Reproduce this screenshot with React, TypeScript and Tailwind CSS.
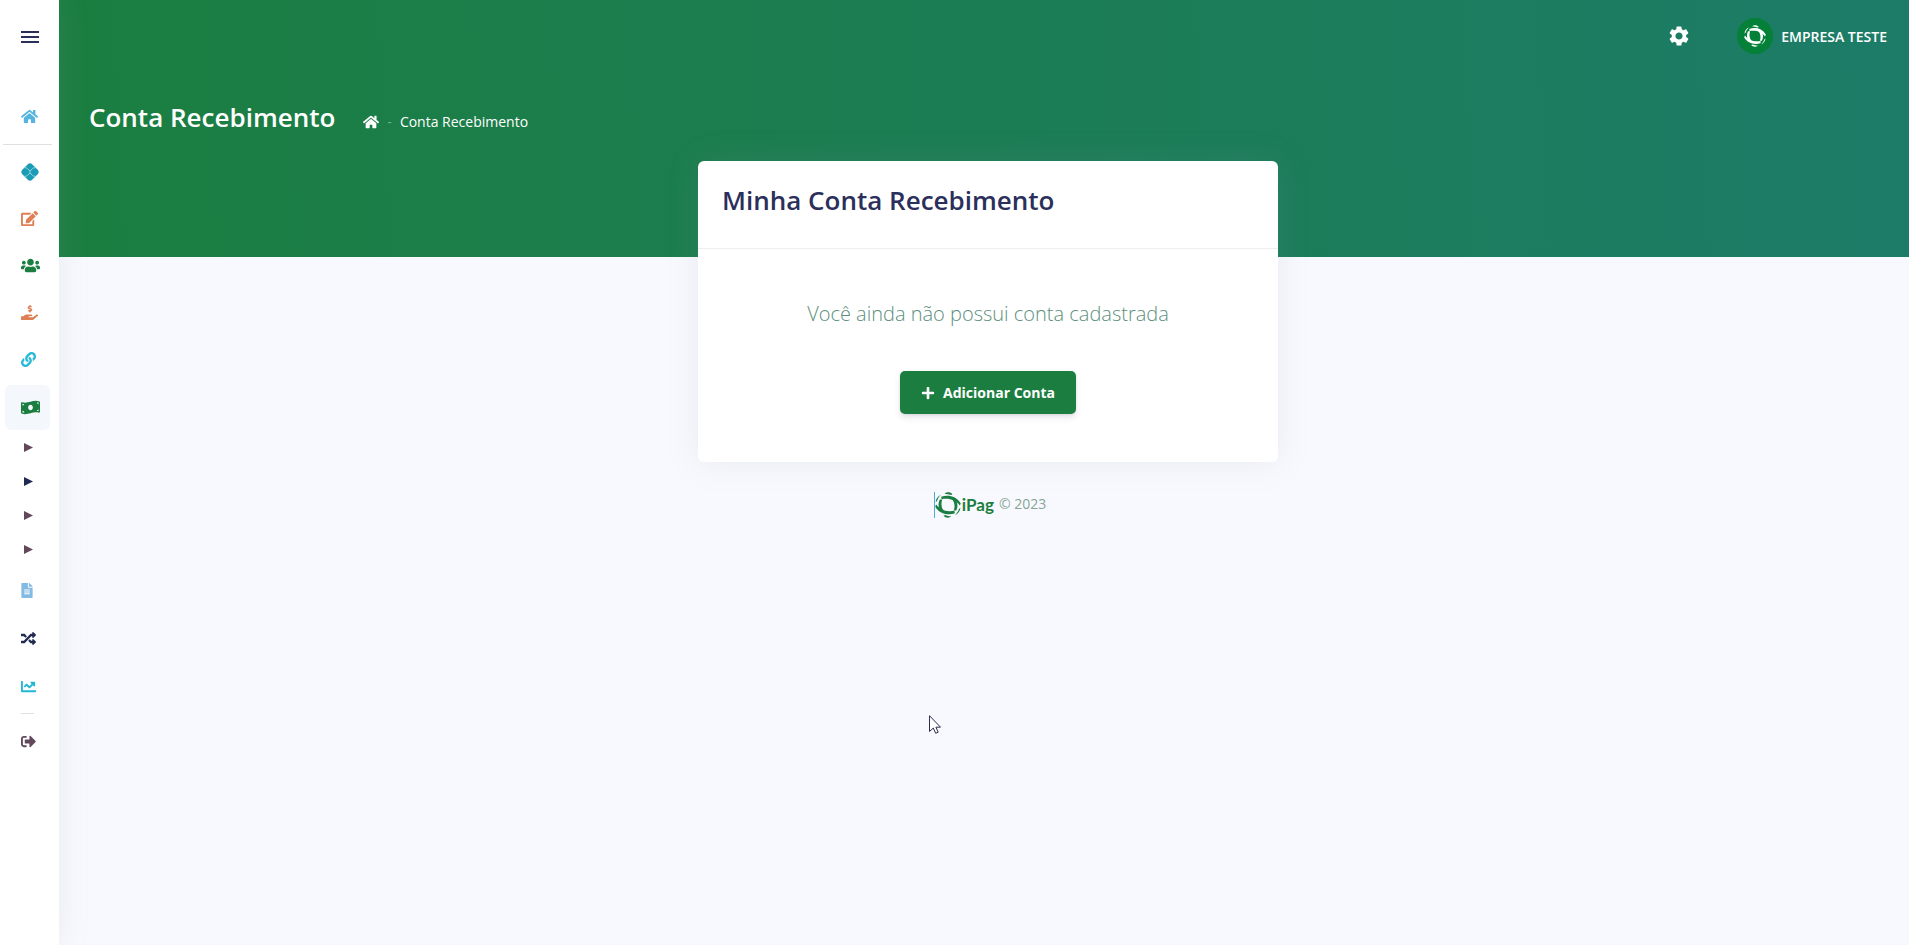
import {
  FaChartLine,
  FaEdit,
  FaFileAlt,
  FaHandHoldingUsd,
  FaHome,
  FaLink,
  FaMoneyBillWave,
  FaPlus,
  FaRandom,
  FaSignOutAlt,
  FaUsers,
} from "react-icons/fa";
import { MdSettings } from "react-icons/md";

function PixIcon({ className }: { className?: string }) {
  return (
    <svg viewBox="0 0 18 18" className={className} aria-hidden="true">
      <rect x="2" y="2" width="14" height="14" rx="3.4" transform="rotate(45 9 9)" fill="currentColor" />
      <path
        d="M3.500 4.800h1.400c.6 0 1 .2 1.400.6L9 8.200l2.700-2.800c.4-.4.8-.6 1.400-.6h1.400M3.500 13.200h1.400c.6 0 1-.2 1.400-.6L9 9.800l2.700 2.800c.4.4.8.6 1.400.6h1.400M9 8.200v1.600"
        fill="none"
        stroke="#8fdbe8"
        strokeWidth="1"
      />
    </svg>
  );
}

function LogoMark({ className }: { className?: string }) {
  return (
    <svg viewBox="0 0 26 26" className={className} aria-hidden="true" fill="currentColor">
      <path d="M9.500 1.500C12-.3 15.500 0 17.500 2.300L16 3.100C14 2.300 11.800 2.100 9.500 1.500Z" />
      <path d="M16.500 24.500C14 26.300 10.500 26 8.500 23.700L10 22.900C12 23.700 14.200 23.900 16.500 24.500Z" />
      <path d="M6.200 4.800C12 2.400 21.500 3.400 25.800 11.500L24.800 13.500C20.500 7.500 13.500 5.800 6.600 7.200Z" />
      <path d="M19.800 21.200C14 23.600 4.500 22.600.2 14.500L1.200 12.500C5.500 18.500 12.500 20.200 19.400 18.800Z" />
      <path d="M4.800 7.500C2.600 11.500 3.200 16.500 7 19.800L9.300 19.300C6.300 15.800 5.800 11.800 7.200 7.500Z" />
      <path d="M21.200 18.500C23.400 14.500 22.800 9.500 19 6.200L16.700 6.700C19.700 10.200 20.200 14.200 18.800 18.500Z" />
      <path d="M6 2.800C3 4 .8 7 .6 10.200L2 9C2.800 6.600 4.200 4.500 6 2.800Z" />
      <path d="M20 23.200C23 22 25.200 19 25.400 15.800L24 17C23.200 19.400 21.800 21.500 20 23.200Z" />
    </svg>
  );
}

function Arrow() {
  return (
    <svg viewBox="0 0 9 9" className="w-[9px] h-[9px]" aria-hidden="true">
      <path d="M0 0L9 4.500L0 9Z" fill="currentColor" />
    </svg>
  );
}

const mainItems = [
  { label: "Pix", icon: <PixIcon className="w-[18px] h-[18px] text-[#1d9bb4]" /> },
  { label: "Cobranças", icon: <FaEdit className="w-[17px] h-[17px] text-[#e07e56]" /> },
  { label: "Clientes", icon: <FaUsers className="w-[19px] h-[19px] text-[#1b7e40]" /> },
  { label: "Recebimentos", icon: <FaHandHoldingUsd className="w-[17px] h-[17px] text-[#dd7f55]" /> },
  { label: "Links", icon: <FaLink className="w-[15px] h-[15px] text-[#27b8d6]" /> },
  { label: "Financeiro", icon: <FaMoneyBillWave className="w-[19px] h-[19px] text-[#1b7e40]" />, active: true },
];

const subItems = [
  { label: "Extrato", color: "text-[#62485a]" },
  { label: "Conta Recebimento", color: "text-[#212a50]" },
  { label: "Transferências", color: "text-[#62485a]" },
  { label: "Antecipações", color: "text-[#62485a]" },
];

const reportItems = [
  { label: "Relatórios", icon: <FaFileAlt className="w-3 h-[15px] text-[#84bbe4]" /> },
  { label: "Split", icon: <FaRandom className="w-[15px] h-[15px] text-[#212a50]" /> },
  { label: "Gráficos", icon: <FaChartLine className="w-[15px] h-[15px] text-[#22b8d4]" /> },
];

function Sidebar() {
  return (
    <aside className="relative z-10 w-[59px] shrink-0 bg-white shadow-[0_0_32px_0_rgba(136,152,170,0.15)]">
      <button aria-label="Menu" className="mt-[31px] ml-[21px] flex w-[18px] flex-col gap-[3px]">
        <span className="h-0.5 w-full bg-[#2b2f5b]" />
        <span className="h-0.5 w-full bg-[#2b2f5b]" />
        <span className="h-0.5 w-full bg-[#2b2f5b]" />
      </button>

      <nav className="mt-[51px]">
        <a href="#inicio" aria-label="Início" className="flex h-[45px] items-center pl-[21px]">
          <FaHome className="w-[17px] h-[17px] text-[#56b4df]" />
        </a>
        <hr className="mt-[5px] mr-[7px] mb-1 ml-[3px] border-[#e0e0e4]" />

        <div className="flex flex-col gap-0.5">
          {mainItems.map((item) => (
            <a
              key={item.label}
              href="#menu"
              aria-label={item.label}
              className={
                item.active
                  ? "mt-px ml-[5px] flex h-[45px] w-[45px] items-center rounded-md bg-[#f4f8fc] pl-4"
                  : "ml-[5px] flex h-[45px] w-[45px] items-center pl-4"
              }
            >
              {item.icon}
            </a>
          ))}
        </div>

        <div>
          {subItems.map((item) => (
            <a
              key={item.label}
              href="#submenu"
              aria-label={item.label}
              className={`flex h-[34px] items-center pl-6 ${item.color}`}
            >
              <Arrow />
            </a>
          ))}
        </div>

        <div className="flex flex-col">
          {reportItems.map((item) => (
            <a key={item.label} href="#menu" aria-label={item.label} className="flex h-12 items-center pl-[21px]">
              {item.icon}
            </a>
          ))}
        </div>

        <hr className="mt-[3px] mb-[5px] ml-[21px] w-[13px] border-[#e0e0e4]" />
        <a href="#sair" aria-label="Sair" className="flex h-[45px] items-center pl-[21px]">
          <FaSignOutAlt className="w-[15px] h-[15px] text-[#62485a]" />
        </a>
      </nav>
    </aside>
  );
}

function Header() {
  return (
    <header className="h-[257px] bg-[linear-gradient(87deg,#1b7e40_0%,#1c7c68_100%)] text-white">
      <div className="flex h-[72px] items-center justify-end pr-[22px]">
        <button aria-label="Configurações" className="mr-[46px]">
          <MdSettings className="w-6 h-6" />
        </button>
        <button className="flex items-center gap-2">
          <span className="flex h-9 w-9 items-center justify-center rounded-full bg-[#048038]">
            <LogoMark className="w-[22px] h-[22px]" />
          </span>
          <span className="pt-0.5 text-sm font-semibold">EMPRESA TESTE</span>
        </button>
      </div>
      <div className="mt-[26px] flex items-center pl-[30px]">
        <h1 className="text-[26px] leading-[39px] font-semibold">Conta Recebimento</h1>
        <nav className="mt-2 ml-7 flex items-center text-sm">
          <a href="#inicio" aria-label="Início">
            <FaHome className="w-4 h-4" />
          </a>
          <span className="mx-2 text-[#6fae8a]">-</span>
          <span>Conta Recebimento</span>
        </nav>
      </div>
    </header>
  );
}

function AccountCard() {
  return (
    <section className="w-full max-w-[580px] rounded-md bg-white shadow-[0_0_32px_0_rgba(136,152,170,0.15)]">
      <div className="border-b border-[#eeeef0] px-6 pt-5 pb-7">
        <h2 className="text-[26px] leading-[39px] font-semibold text-[#2b2f5b]">Minha Conta Recebimento</h2>
      </div>
      <div className="flex flex-col items-center pt-[50px] pb-12">
        <p className="text-xl leading-[30px] font-light text-[#5c8f7c]">Você ainda não possui conta cadastrada</p>
        <button className="mt-[42px] flex h-[43px] w-[176px] items-center justify-center gap-2 rounded-[5px] bg-[#1b7e40] text-sm font-bold text-white shadow-[0_4px_6px_rgba(50,50,93,0.11),0_1px_3px_rgba(0,0,0,0.08)]">
          <FaPlus className="w-[14px] h-[14px]" />
          Adicionar Conta
        </button>
      </div>
    </section>
  );
}

function Cursor() {
  return (
    <svg viewBox="0 0 12 19" className="absolute top-[715px] left-[929px] z-20 h-[19px] w-3" aria-hidden="true">
      <path
        d="M.5.700V16.500L4.300 13L6.700 18.300L9.200 17.200L6.900 12.200H11.500Z"
        fill="#fff"
        stroke="#2b2f4b"
        strokeWidth="1"
      />
    </svg>
  );
}

export default function App() {
  return (
    <div className="relative flex min-h-screen bg-[#f8f9fe] font-['Open_Sans',sans-serif]">
      <Sidebar />
      <div className="flex-1">
        <Header />
        <main className="-mt-24 flex flex-col items-center pl-2">
          <AccountCard />
          <footer className="mt-[30px] flex items-center pl-1 text-sm text-[#86a596]">
            <a href="#ipag" className="flex items-center border-l border-[#4aaed4] text-[#1b7e40]">
              <LogoMark className="w-[26px] h-[26px]" />
              <span className="ml-px font-['Lato',sans-serif] text-[17px] leading-6 font-bold">iPag</span>
            </a>
            <span className="ml-[5px] pb-0.5">© 2023</span>
          </footer>
        </main>
      </div>
      <Cursor />
    </div>
  );
}
